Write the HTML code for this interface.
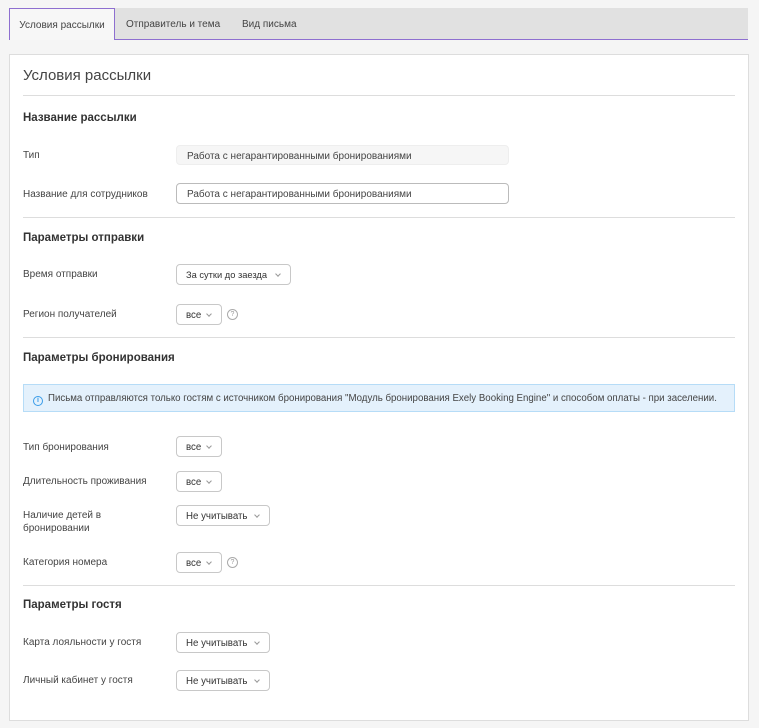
<!DOCTYPE html><html><head><meta charset="utf-8"><style>
body{margin:0;width:759px;height:728px;background:#f5f5f5;font-family:"Liberation Sans",sans-serif;color:#444;position:relative;overflow:hidden}
.a{position:absolute}
.tabs{left:9px;top:8px;width:739px;height:31px;background:#e1e1e1;border-bottom:1px solid #8e6fd0}
.tab{top:0;height:31px;line-height:33px;font-size:10px;color:#444}
.act{left:0;width:106px;border:1px solid #8e6fd0;border-bottom:none;background:#f7f7f7;text-align:center;box-sizing:border-box;height:32px}
.panel{left:9px;top:54px;width:738px;height:665px;background:#fff;border:1px solid #ddd}
.hr{left:23px;width:712px;height:1px;background:#ddd}
.h{left:23px;font-size:11.5px;font-weight:bold;color:#333}
.l{left:23px;font-size:10px;color:#444}
.inp{left:176px;width:333px;height:20px;border-radius:4px;box-sizing:border-box;font-size:10px;line-height:20px;padding-left:10px;padding-top:1px;color:#444}
.sel{left:176px;height:21px;border:1px solid #c8c8c8;border-radius:4px;box-sizing:border-box;font-size:9.7px;line-height:21px;padding-left:9px;color:#333}
.sel:after{content:"";position:absolute;right:10px;top:7px;width:3px;height:3px;border-right:1px solid #999;border-bottom:1px solid #999;transform:rotate(45deg)}
.q{width:9px;height:9px;border:1px solid #aaa;border-radius:50%;font-size:7px;line-height:9px;text-align:center;color:#999}
</style></head><body>
<div class="a tabs">
<div class="a tab act">Условия рассылки</div>
<div class="a tab" style="left:117px">Отправитель и тема</div>
<div class="a tab" style="left:233px">Вид письма</div>
</div>
<div class="a panel"></div>
<div class="a" style="left:23px;top:67px;font-size:15px;color:#444">Условия рассылки</div>
<div class="a hr" style="top:95px"></div>
<div class="a h" style="top:112px">Название рассылки</div>
<div class="a l" style="top:150px">Тип</div>
<div class="a inp" style="top:145px;background:#f6f6f6;border:1px solid #eee">Работа с негарантированными бронированиями</div>
<div class="a l" style="top:189px">Название для сотрудников</div>
<div class="a inp" style="top:183px;height:21px;border:1px solid #bbb">Работа с негарантированными бронированиями</div>
<div class="a hr" style="top:217px"></div>
<div class="a h" style="top:232px">Параметры отправки</div>
<div class="a l" style="top:269px">Время отправки</div>
<div class="a sel" style="top:264px;width:115px;font-size:9.3px">За сутки до заезда</div>
<div class="a l" style="top:309px">Регион получателей</div>
<div class="a sel" style="top:304px;width:46px">все</div>
<div class="a q" style="left:227px;top:309px">?</div>
<div class="a hr" style="top:337px"></div>
<div class="a h" style="top:352px">Параметры бронирования</div>
<div class="a" style="left:23px;top:384px;width:710px;height:26px;background:#e4f1fc;border:1px solid #b6dcf7;font-size:9.7px;line-height:27px;color:#444;white-space:nowrap"><span style="display:inline-block;width:8px;height:8px;border:1px solid #3a9ce8;border-radius:50%;margin:0 5px 0 9px;vertical-align:-1px;font-size:7px;line-height:8px;text-align:center;color:#3a9ce8;font-weight:bold">i</span>Письма отправляются только гостям с источником бронирования "Модуль бронирования Exely Booking Engine" и способом оплаты - при заселении.</div>
<div class="a l" style="top:442px">Тип бронирования</div>
<div class="a sel" style="top:436px;width:46px">все</div>
<div class="a l" style="top:476px">Длительность проживания</div>
<div class="a sel" style="top:471px;width:46px">все</div>
<div class="a l" style="top:509px;line-height:13px">Наличие детей в<br>бронировании</div>
<div class="a sel" style="top:505px;width:94px">Не учитывать</div>
<div class="a l" style="top:557px">Категория номера</div>
<div class="a sel" style="top:552px;width:46px">все</div>
<div class="a q" style="left:227px;top:557px">?</div>
<div class="a hr" style="top:585px"></div>
<div class="a h" style="top:599px">Параметры гостя</div>
<div class="a l" style="top:637px">Карта лояльности у гостя</div>
<div class="a sel" style="top:632px;width:94px">Не учитывать</div>
<div class="a l" style="top:675px">Личный кабинет у гостя</div>
<div class="a sel" style="top:670px;width:94px">Не учитывать</div>
</body></html>
